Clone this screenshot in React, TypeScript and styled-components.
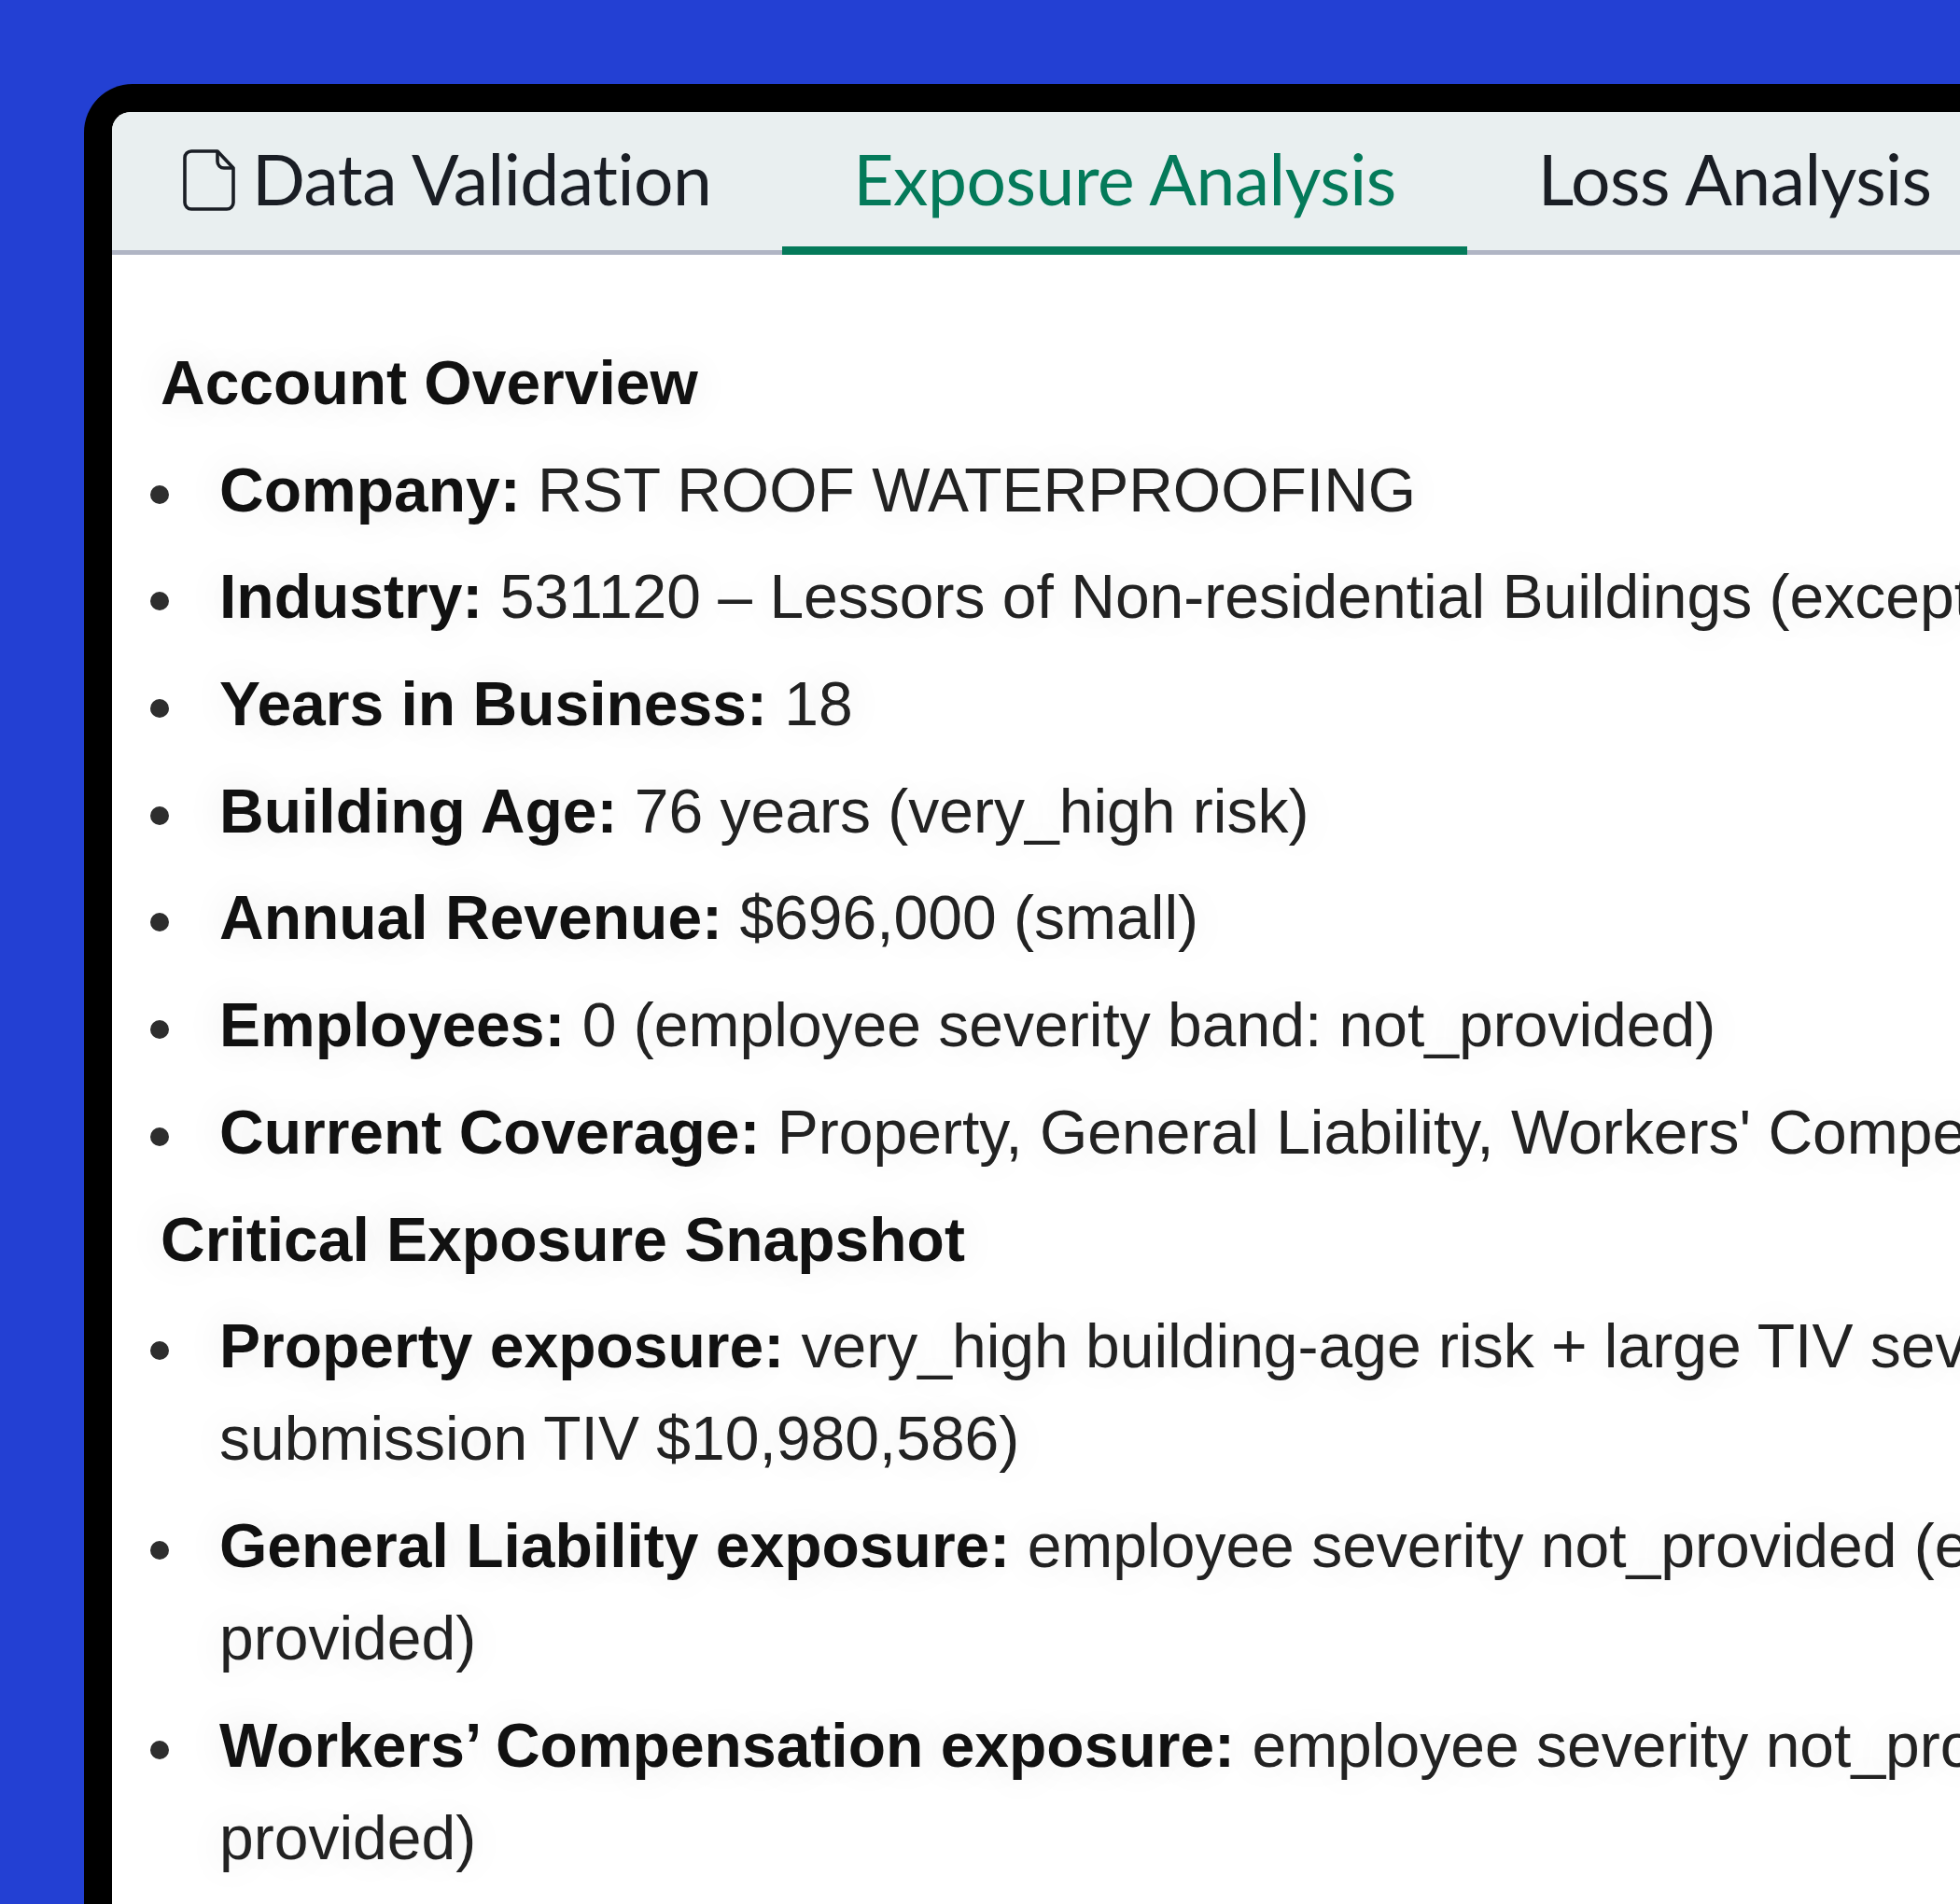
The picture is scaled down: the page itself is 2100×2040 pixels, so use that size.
import React from 'react';
import styled, { createGlobalStyle } from 'styled-components';

const GlobalStyle = createGlobalStyle`
  html, body {
    margin: 0;
    padding: 0;
    width: 2100px;
    height: 2040px;
    overflow: hidden;
    background: #2340d3;
  }
`;

const Page = styled.div`
  width: 2100px;
  height: 2040px;
  padding: 90px 0 0 90px;
  box-sizing: border-box;
  overflow: hidden;
`;

const Frame = styled.div`
  width: 2300px;
  height: 2100px;
  box-sizing: border-box;
  padding: 30px;
  background: #000;
  border-radius: 52px 52px 0 0;
`;

const Screen = styled.div`
  height: 100%;
  background: #fff;
  border-radius: 20px 20px 0 0;
  overflow: hidden;
`;

const TabBar = styled.div`
  display: flex;
  height: 153px;
  box-sizing: border-box;
  background: #e9eff0;
  border-bottom: 5px solid #b0b5c4;
`;

const Tab = styled.div<{ $active?: boolean }>`
  display: flex;
  align-items: center;
  gap: 18px;
  height: 153px;
  box-sizing: border-box;
  padding: 0 76px 2px;
  font-family: Lato, sans-serif;
  font-size: 75px;
  letter-spacing: -0.5px;
  white-space: nowrap;
  color: ${(p) => (p.$active ? '#047a5a' : '#1a1e25')};
  border-bottom: 9px solid ${(p) => (p.$active ? '#047a5a' : 'transparent')};
`;

const FileIcon = styled.svg`
  width: 56px;
  height: 66px;
  flex: none;
  margin-top: 3px;
`;

const Content = styled.div`
  padding: 88px 0 0 52px;
  font-family: 'Liberation Sans', Arial, sans-serif;
  font-size: 66px;
  line-height: 99px;
  color: #222;
  white-space: nowrap;
  text-shadow: 0 0 40px rgba(0, 0, 0, 0.1);
`;

const Heading = styled.div`
  font-weight: 700;
  color: #111;
  margin-bottom: 15.7px;
`;

const List = styled.ul`
  list-style: none;
  margin: 0;
  padding: 0;
`;

const Item = styled.li`
  position: relative;
  padding-left: 63px;
  margin-bottom: 15.7px;

  &::before {
    content: '';
    position: absolute;
    left: -11px;
    top: 44px;
    width: 20px;
    height: 20px;
    border-radius: 50%;
    background: #2e2e2e;
  }
`;

const Label = styled.b`
  color: #111;
`;

type Row = { label: string; lines: string[] };

const overview: Row[] = [
  { label: 'Company:', lines: ['RST ROOF WATERPROOFING'] },
  { label: 'Industry:', lines: ['531120 – Lessors of Non-residential Buildings (except Miniwarehouses)'] },
  { label: 'Years in Business:', lines: ['18'] },
  { label: 'Building Age:', lines: ['76 years (very_high risk)'] },
  { label: 'Annual Revenue:', lines: ['$696,000 (small)'] },
  { label: 'Employees:', lines: ['0 (employee severity band: not_provided)'] },
  { label: 'Current Coverage:', lines: ["Property, General Liability, Workers' Compensation"] },
];

const snapshot: Row[] = [
  { label: 'Property exposure:', lines: ['very_high building-age risk + large TIV severity', 'submission TIV $10,980,586)'] },
  { label: 'General Liability exposure:', lines: ['employee severity not_provided (employee count not', 'provided)'] },
  { label: 'Workers’ Compensation exposure:', lines: ['employee severity not_provided', 'provided)'] },
];

function Rows({ rows }: { rows: Row[] }) {
  return (
    <List>
      {rows.map((row) => (
        <Item key={row.label}>
          <Label>{row.label}</Label> {row.lines[0]}
          {row.lines[1] && (
            <>
              <br />
              {row.lines[1]}
            </>
          )}
        </Item>
      ))}
    </List>
  );
}

export default function App() {
  return (
    <Page>
      <GlobalStyle />
      <Frame>
        <Screen>
          <TabBar>
            <Tab>
              <FileIcon viewBox="0 0 56 66" fill="none" stroke="#1a1e25" strokeWidth="3.6" strokeLinejoin="round">
                <path d="M9 2H37L54 20V57a7 7 0 0 1-7 7H9a7 7 0 0 1-7-7V9a7 7 0 0 1 7-7Z" />
                <path d="M37 2V13a7 7 0 0 0 7 7H54" />
              </FileIcon>
              Data Validation
            </Tab>
            <Tab $active>Exposure Analysis</Tab>
            <Tab>Loss Analysis</Tab>
          </TabBar>
          <Content>
            <Heading>Account Overview</Heading>
            <Rows rows={overview} />
            <Heading>Critical Exposure Snapshot</Heading>
            <Rows rows={snapshot} />
          </Content>
        </Screen>
      </Frame>
    </Page>
  );
}
